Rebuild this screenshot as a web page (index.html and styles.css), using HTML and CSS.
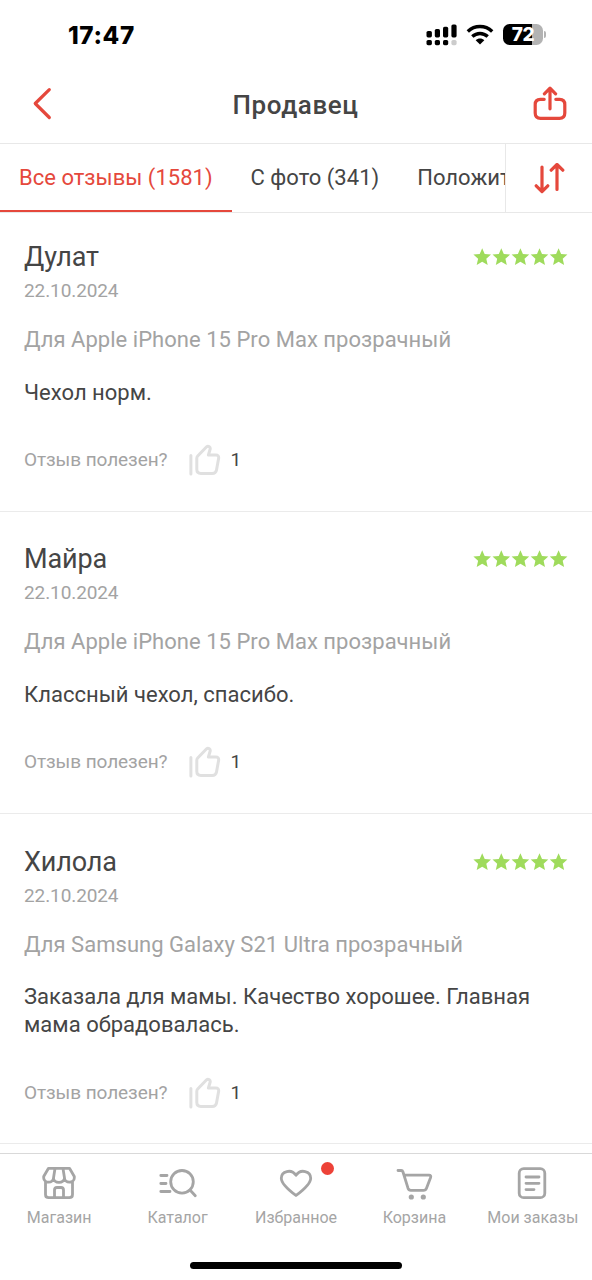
FILE: index.html
```html
<!DOCTYPE html>
<html lang="ru">
<head>
<meta charset="utf-8">
<title>Продавец</title>
<link rel="stylesheet" href="styles.css">
</head>
<body>
<svg width="0" height="0" class="defs">
  <defs>
    <path id="star" d="M9.2 .2 11.7 6 18 6.6 13.3 10.8 14.7 17 9.2 13.8 3.7 17 5.1 10.8 .4 6.6 6.7 6Z"/>
    <symbol id="stars" viewBox="0 0 95 18">
      <use href="#star"/><use href="#star" x="19.1"/><use href="#star" x="38.2"/><use href="#star" x="57.3"/><use href="#star" x="76.4"/>
    </symbol>
    <symbol id="thumb" viewBox="0 0 32 32">
      <path d="M1.9 11.5V30M7.8 14.2Q7.8 12.9 8.7 12L17.6 2.8C19.3 1.3 21.8 3.2 21.1 5.3L19.4 11H26.7Q30.2 11 29.6 14.4L27.5 26Q26.8 29.5 23.2 29.5H12Q7.8 29.5 7.8 25.3Z"/>
    </symbol>
  </defs>
</svg>
<div class="screen">
  <div class="status">
    <span class="time">17:47</span>
    <div class="indicators">
      <svg class="signal" width="32" height="22" viewBox="0 0 32 22">
        <rect x=".5" y="7" width="5.4" height="6.4" rx="1.6"/><rect x="8.8" y="5" width="5.2" height="8.4" rx="1.6"/><rect x="17" y="2.8" width="5.2" height="10.6" rx="1.6"/><rect x="25.4" y=".5" width="5.2" height="12.9" rx="1.6"/>
        <rect x=".5" y="16" width="5.4" height="5.2" rx="1.6"/><rect x="8.8" y="16" width="5.2" height="5.2" rx="1.6"/><rect x="17" y="16" width="5.2" height="5.2" rx="1.6"/><rect class="off" x="25.4" y="16" width="5.2" height="5.2" rx="1.6"/>
      </svg>
      <svg class="wifi" width="28" height="21" viewBox="0 0 28 21">
        <path class="arc" d="M1.8 7.5C8.8.9 19.2.9 26.2 7.5M6.3 12.5C10.8 8.4 17.2 8.4 21.7 12.5"/>
        <path d="M14 20.4 9.7 16.2C12 14 16 14 18.3 16.2Z"/>
      </svg>
      <div class="battery"><span class="charge">72</span><i class="tip"></i></div>
    </div>
  </div>
  <header class="header">
    <svg width="24" height="34" viewBox="0 0 24 34"><path d="M18.3 2.7 4.2 16.5 18.3 30.5" /></svg>
    <h1 class="title">Продавец</h1>
    <svg width="34" height="36" viewBox="0 0 34 36"><path d="M11.2 13.3H7.4Q2.2 13.3 2.2 18.5V27Q2.2 32.4 7.6 32.4H26.4Q31.8 32.4 31.8 27V18.5Q31.8 13.3 26.6 13.3H22.8M17 22.8V3M11.4 7.8 17 2.2 22.6 7.8"/></svg>
  </header>
  <nav class="tabs">
    <div class="tab-list">
      <span class="tab active">Все отзывы (1581)</span>
      <span class="tab photo">С фото (341)</span>
      <span class="tab positive">Положительные</span>
    </div>
    <div class="sort">
      <svg width="32" height="32" viewBox="0 0 32 32"><path d="M9 4V28M3.2 22.8 9 28.6 14.8 22.8M24 26.5V2M18.2 7.2 24 1.5 29.8 7.2"/></svg>
    </div>
  </nav>
  <main class="reviews">
    <article class="review">
      <div class="top"><h2 class="name">Дулат</h2><svg class="stars"><use href="#stars"/></svg></div>
      <div class="date">22.10.2024</div>
      <div class="product">Для Apple iPhone 15 Pro Max прозрачный</div>
      <p class="text">Чехол норм.</p>
      <div class="useful"><span class="question">Отзыв полезен?</span><svg class="thumb"><use href="#thumb"/></svg><span class="count">1</span></div>
    </article>
    <article class="review">
      <div class="top"><h2 class="name">Майра</h2><svg class="stars"><use href="#stars"/></svg></div>
      <div class="date">22.10.2024</div>
      <div class="product">Для Apple iPhone 15 Pro Max прозрачный</div>
      <p class="text">Классный чехол, спасибо.</p>
      <div class="useful"><span class="question">Отзыв полезен?</span><svg class="thumb"><use href="#thumb"/></svg><span class="count">1</span></div>
    </article>
    <article class="review">
      <div class="top"><h2 class="name">Хилола</h2><svg class="stars"><use href="#stars"/></svg></div>
      <div class="date">22.10.2024</div>
      <div class="product">Для Samsung Galaxy S21 Ultra прозрачный</div>
      <p class="text">Заказала для мамы. Качество хорошее. Главная мама обрадовалась.</p>
      <div class="useful"><span class="question">Отзыв полезен?</span><svg class="thumb"><use href="#thumb"/></svg><span class="count">1</span></div>
    </article>
  </main>
  <nav class="bottom">
    <div class="item"><svg viewBox="0 0 40 36"><path d="M9.5 3.3H30.5L35.3 11.5V13A4.7 4 0 0 1 25.5 13A5.5 4.3 0 0 1 14.5 13A4.7 4 0 0 1 4.7 13V11.5ZM16 3.5 14.5 13M24 3.5 25.5 13M6.5 17V29.5Q6.5 32.7 9.7 32.7H30.3Q33.5 32.7 33.5 29.5V17M15.5 32.5V25Q15.5 22.5 18 22.5H22Q24.5 22.5 24.5 25V32.5"/></svg>Магазин</div>
    <div class="item"><svg viewBox="0 0 40 36"><circle cx="24" cy="16.8" r="11.3"/><path d="M32 25 37.3 30.8M2.8 10.5H9M2.8 18.5H8M2.8 26.5H12"/></svg>Каталог</div>
    <div class="item"><svg viewBox="0 0 40 36"><path d="M20 30.5C16 27.5 5.3 19.5 5.3 13.2C5.3 6.3 15.3 3.3 20 10.3C24.7 3.3 34.7 6.3 34.7 13.2C34.7 19.5 24 27.5 20 30.5Z"/></svg><i class="dot"></i>Избранное</div>
    <div class="item"><svg viewBox="0 0 40 36"><path d="M4 5.5H7.2Q8.5 5.5 9 7L14 23.2Q14.7 25.3 16.8 25.3H29.5Q31.7 25.3 32.5 23.2L36.6 12.5Q37.4 10.2 35 10.2H10.2"/><g class="wheels"><circle cx="17.3" cy="32" r="2.6"/><circle cx="29.3" cy="32" r="2.6"/></g></svg>Корзина</div>
    <div class="item"><svg viewBox="0 0 40 36"><rect x="6.2" y="3.7" width="25.6" height="29" rx="4.5"/><path d="M13 12H26M13 18.3H26M13 24.6H21"/></svg>Мои заказы</div>
    <div class="home"></div>
  </nav>
</div>
</body>
</html>
```

FILE: styles.css
```css
* { box-sizing: border-box; }
body { margin: 0; background: #fff; font-family: Roboto, "Liberation Sans", sans-serif; color: #454545; }
.defs { position: absolute; }
.screen { width: 592px; height: 1280px; display: flex; flex-direction: column; overflow: hidden; }
svg { flex: none; }

.status { height: 66px; display: flex; justify-content: space-between; padding: 19px 46px 0 68px; color: #000; }
.time { font: 800 24.3px/32px Inter, sans-serif; letter-spacing: .6px; }
.indicators { display: flex; align-items: flex-start; padding-top: 5px; }
.signal .off { fill: #ccc; }
.wifi { margin-left: 8px; }
.wifi .arc { fill: none; stroke: #000; stroke-width: 3.4; }
.battery { display: flex; align-items: center; margin-left: 9px; gap: 1px; }
.charge { width: 40px; height: 21px; border-radius: 6.5px; background: linear-gradient(90deg, #000 72%, #b3b3b3 72%); color: #fff; font: 800 19px/21px Inter, sans-serif; text-align: center; letter-spacing: -.5px; }
.tip { width: 2px; height: 7px; border-radius: 0 2px 2px 0; background: #b3b3b3; }

.header { height: 78px; border-bottom: 1px solid #e8e8e8; display: flex; justify-content: space-between; align-items: center; padding: 0 25px 2px 31px; }
.header svg, .sort svg { fill: none; stroke: #e5483c; stroke-width: 3.2; stroke-linecap: round; stroke-linejoin: round; }
.title { margin: 3px 0 0 3px; font-size: 26px; line-height: 32px; font-weight: 500; letter-spacing: .6px; }

.tabs { height: 69px; display: flex; border-bottom: 1px solid #e8e8e8; font-size: 22px; letter-spacing: .02px; }
.tab-list { width: 505px; display: flex; overflow: hidden; white-space: nowrap; }
.tab { flex: none; line-height: 28px; padding: 20px 19px 0; }
.active { width: 231.5px; color: #e5483c; border-bottom: 2px solid #e5483c; }
.sort { flex: 1; padding-top: 1px; border-left: 1px solid #e8e8e8; display: flex; justify-content: center; align-items: center; }

.reviews { flex: 1; min-height: 0; overflow: hidden; }
.review { padding: 31.4px 24px 35px; border-bottom: 1px solid #ebebeb; }
.review:first-child { padding-top: 28px; }
.review:last-child { padding-bottom: 34px; }
.top { display: flex; justify-content: space-between; align-items: center; }
.name { margin: 0; font-size: 27px; line-height: 32px; font-weight: 400; letter-spacing: -.15px; }
.stars { width: 95px; height: 18px; margin-right: -.4px; fill: #9fdb5c; }
.date { margin-top: 6px; font-size: 19px; line-height: 24px; letter-spacing: -.1px; color: #a3a3a3; }
.product { margin-top: 23px; font-size: 22px; line-height: 28px; letter-spacing: .03px; color: #a3a3a3; }
.text { margin: 24.6px 0 0; font-size: 22px; line-height: 28px; letter-spacing: .02px; }
.useful { margin-top: 37.4px; height: 32px; display: flex; align-items: center; font-size: 19px; line-height: 24px; }
.question { width: 165.4px; color: #a3a3a3; letter-spacing: -.08px; }
.thumb { width: 32px; height: 32px; fill: none; stroke: #e0e0e0; stroke-width: 3; stroke-linecap: round; stroke-linejoin: round; }
.count { margin-left: 9px; }

.bottom { height: 127px; border-top: 1px solid #d9d9d9; display: grid; grid-template-columns: repeat(5, 1fr); grid-template-rows: 1fr 18px; }
.item { position: relative; display: flex; flex-direction: column; align-items: center; padding-top: 11px; font-size: 16px; line-height: 20px; color: #a5a5a5; white-space: nowrap; }
.item svg { width: 40px; height: 36px; margin-bottom: 7px; fill: none; stroke: #a5a5a5; stroke-width: 2.8; stroke-linecap: round; stroke-linejoin: round; }
.item .wheels { fill: #a5a5a5; stroke: none; }
.dot { position: absolute; left: 84px; top: 8px; width: 13px; height: 13px; border-radius: 50%; background: #ed4238; }
.home { grid-column: 1 / -1; justify-self: center; width: 212px; height: 7px; border-radius: 4px; background: #000; }
```
